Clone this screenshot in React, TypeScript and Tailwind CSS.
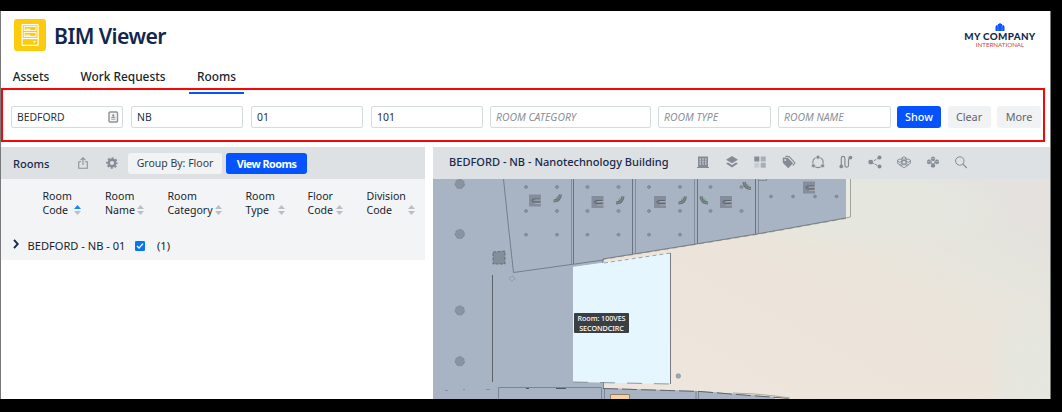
import React from "react";

function AppIcon() {
  return (
    <svg width="32" height="32" viewBox="0 0 32 32" className="shrink-0">
      <rect width="32" height="32" rx="3" fill="#fccb0b" />
      <g fill="none" stroke="#fff" strokeWidth="1.2">
        <rect x="8.1" y="5.6" width="16" height="20.8" rx="0.6" />
        <rect x="10.2" y="7.6" width="11.8" height="3.8" strokeWidth="0.9" />
        <rect x="10.2" y="13.6" width="11.8" height="3.8" strokeWidth="0.9" />
        <path d="M8 19.5h16" />
      </g>
      <path d="M11.5 10.2h5M11.5 16.2h5" stroke="#fff" />
      <circle cx="20.3" cy="22.7" r="1" fill="#fff" />
    </svg>
  );
}

function CompanyLogo() {
  return (
    <div className="flex w-[74px] flex-col items-center">
      <svg width="10" height="8" viewBox="0 0 10 8">
        <path d="M0.5 8V3.4L1.6 2l1.2.8V1.2L4 .8 5 0l1 .8 1.2.4v1.6L8.4 2l1.1 1.4V8z" fill="#0b53ff" />
        <path d="M3 3v5M7 3v5" stroke="#6fa0ff" strokeWidth="0.6" />
      </svg>
      <div className="whitespace-nowrap font-['Lato',sans-serif] text-[9.8px] font-black leading-[11px] tracking-[0.35px] text-[#12294f]">MY COMPANY</div>
      <div className="whitespace-nowrap font-['Lato',sans-serif] text-[6.2px] leading-[6px] text-[#d5432f]">INTERNATIONAL</div>
    </div>
  );
}

function Field({ width, value, hint, contact }: { width: string; value?: string; hint?: string; contact?: boolean }) {
  return (
    <div className={`${width} flex h-[22px] shrink-0 items-center justify-between rounded-[2px] border border-[#d5dcde] bg-white pl-[5px] pr-[3px] text-[10.4px]`}>
      {value ? <span className="pt-px text-[#27313c]">{value}</span> : <span className="whitespace-nowrap pt-px italic text-[#8a9097]">{hint}</span>}
      {contact && (
        <svg width="11" height="12" viewBox="0 0 11 12">
          <rect x="1" y="1" width="8.5" height="10" rx="1" fill="#f4f4f4" stroke="#8f9194" strokeWidth="1.4" />
          <circle cx="5.25" cy="4.3" r="1.1" fill="#85888b" />
          <path d="M3.3 6.8q2-2 4 0zM3.3 8.5h4" fill="#85888b" stroke="#85888b" strokeWidth="0.6" />
        </svg>
      )}
    </div>
  );
}

function Sort({ active }: { active?: boolean }) {
  return (
    <svg width="7" height="10" viewBox="0 0 7 10" className="mb-[2px] shrink-0">
      <path d="M0 4L3.5 0 7 4z" fill={active ? "#1686ff" : "#b9bfc5"} />
      <path d="M0 6h7L3.5 10z" fill="#b9bfc5" />
    </svg>
  );
}

const columns = [
  { a: "Room", b: "Code", w: "w-[62.5px]", s: "w-[38px]" },
  { a: "Room", b: "Name", w: "w-[62.5px]", s: "w-[39px]" },
  { a: "Room", b: "Category", w: "w-[78px]", s: "w-[54px]" },
  { a: "Room", b: "Type", w: "w-[62px]", s: "w-[39px]" },
  { a: "Floor", b: "Code", w: "w-[59px]", s: "w-[35px]" },
  { a: "Division", b: "Code", w: "w-[50px]", s: "w-[48px]" },
];

const G = "#848b95";
function Tool({ children }: { children: React.ReactNode }) {
  return (
    <svg width="14" height="14" viewBox="0 0 14 14" fill={G} className="shrink-0">
      {children}
    </svg>
  );
}

function Toolbar() {
  return (
    <div className="flex items-center gap-[14.7px]">
      <Tool>
        <path d="M2 1.5h10V12h1v1H1v-1h1z" />
        <path d="M4.2 3.2v6.6M7 3.2v6.6M9.8 3.2v6.6" stroke="#d3d7db" strokeWidth="1.1" />
        <path d="M3.2 5.4h7.6M3.2 7.7h7.6" stroke={G} strokeWidth="0.6" />
      </Tool>
      <Tool>
        <path d="M7 1L13 4.7 7 8.2 1 4.7zM1 8.6l2-1.1 4 2.4 4-2.4 2 1.1L7 12.4z" />
      </Tool>
      <Tool>
        <path d="M1.3 1.5h5v5h-5z" />
        <path d="M7.7 1.5h5v5h-5z" fill="#a7adb4" />
        <path d="M1.3 7.7h5v5h-5z" fill="#c7ccd0" />
        <path d="M7.7 7.7h5v5h-5z" fill="#a7adb4" />
      </Tool>
      <Tool>
        <path d="M.8 3.2v4.6l5.4 5.4 5-5-5.4-5.4L1.2 2.6z" />
        <path d="M3.2 1.3l4 .3 5.7 6.1-2 2.9" fill="none" stroke={G} strokeWidth="1.1" />
        <circle cx="3.2" cy="5" r="1" fill="#dde1e4" />
      </Tool>
      <Tool>
        <circle cx="7" cy="7.4" r="5.2" fill="none" stroke={G} strokeWidth="1.1" />
        <g stroke="#dde1e4" strokeWidth="0.7">
          <circle cx="7" cy="2.2" r="2" />
          <circle cx="2.4" cy="10.8" r="2" />
          <circle cx="11.6" cy="10.8" r="2" />
        </g>
      </Tool>
      <Tool>
        <path d="M2.3 10V3.2a1.8 1.8 0 013.6 0v7.2a1.8 1.8 0 003.6 0V5q0-1.8 1.7-2" fill="none" stroke={G} strokeWidth="1.2" />
        <circle cx="2.3" cy="11.4" r="1.9" />
        <circle cx="11.4" cy="2.6" r="1.9" />
      </Tool>
      <Tool>
        <path d="M11.3 2.8L3 7.2l8.3 4.3" fill="none" stroke={G} strokeDasharray="2.5 1" />
        <circle cx="2.7" cy="7.1" r="2.4" />
        <circle cx="11.5" cy="2.6" r="2" />
        <circle cx="11.5" cy="11.5" r="2" />
      </Tool>
      <Tool>
        <g fill="none" stroke={G} strokeWidth="0.9">
          <path d="M7 1.8l2.2 1v2.1L7 6 4.8 4.9V2.8zM7 5.3l2.2 1v2.2L7 9.6 4.8 8.5V6.3zM7 8.9l2.2 1v1.6L7 12.6l-2.2-1.1V9.9zM2.8 4L5 5v3.5l-2.2 1L.6 8.4V5zM11.2 4l2.2 1v3.4l-2.2 1.1L9 8.5V5zM.6 6.2l2.2 1 2.2-1M9 6.2l2.2 1 2.2-1M4.8 3.4L7 4.4l2.2-1M2.6 9.3v.9l2.2 1M11.4 9.3v.9l-2.2 1" />
        </g>
      </Tool>
      <Tool>
        <path d="M7 1.4l2.1 1.1v2.3L7 5.9 4.9 4.8V2.5zM7 8.4l2.1 1.1v2.2L7 12.8l-2.1-1.1V9.5zM3 4.3l2 1.1v2.8L3 9.3 1 8.2V5.4zM11 4.3l2 1.1v2.8l-2 1.1-2-1.1V5.4z" />
        <path d="M7 5.2l1.8 1v2L7 9.1 5.2 8.2v-2z" fill="none" stroke={G} strokeWidth="0.9" />
        <path d="M5 2.9l2 1 2-1M1 6l2 1 2-1M9 6l2 1 2-1" fill="none" stroke="#dde1e4" strokeWidth="0.5" />
      </Tool>
      <Tool>
        <circle cx="5.8" cy="6" r="4.2" fill="none" stroke={G} strokeWidth="1" />
        <path d="M8.8 9l4 4" stroke={G} strokeWidth="1.1" />
      </Tool>
    </div>
  );
}

const dots: [number, number][] = [
  ...[526, 557, 587.5, 618.5, 649, 680].flatMap((x) => [187, 211, 234.7].map((y) => [x, y] as [number, number])),
  [710.5, 187], [741.5, 187], [710.5, 211], [741.5, 211],
  [771, 196.5], [793, 196.5], [815, 196.5], [836.5, 196.5],
];
const units: [number, number][] = [[535, 200.5], [597.5, 202], [660, 202], [726, 202], [809, 187.5]];
const bends: [number, number, number][] = [[557.5, 198, 1], [620, 200, 1], [682.5, 200, 1], [704, 200, -1], [747, 185.5, -1]];

function FloorPlan() {
  return (
    <svg width="617" height="220" viewBox="433 179 617 220" className="block">
      <defs>
        <linearGradient id="floor" x1="0" y1="0.75" x2="1" y2="0.1">
          <stop offset="0" stopColor="#efe7dd" />
          <stop offset="0.55" stopColor="#ece4da" />
          <stop offset="0.72" stopColor="#e9e4db" />
          <stop offset="0.82" stopColor="#e4e5dd" />
          <stop offset="0.94" stopColor="#e4e1de" />
        </linearGradient>
        <radialGradient id="glow">
          <stop offset="0" stopColor="#e5e7df" />
          <stop offset="0.5" stopColor="#e5e7df" stopOpacity="0.8" />
          <stop offset="1" stopColor="#e5e7df" stopOpacity="0" />
        </radialGradient>
      </defs>
      <path d="M433 179h617v220H433z" fill="url(#floor)" />
      <ellipse cx="850" cy="205" rx="180" ry="48" fill="url(#glow)" />
      <ellipse cx="1030" cy="370" rx="45" ry="80" fill="url(#glow)" />
      <path d="M433 179H846V218L757 234 690 245 603 259V263L573 267V382H603V388L700 391 750 395 775 397V399H433z" fill="#a8b4c3" />
      <path d="M573 267L670.5 253V384L573 382z" fill="#e5f6ff" />
      <path d="M670.5 253V384" stroke="#77797a" />
      <path d="M573 382l97.5 2" stroke="#798187" strokeWidth="0.8" strokeDasharray="15 12" fill="none" />
      <path d="M604 263l67-10" stroke="#78828a" strokeWidth="0.7" strokeDasharray="4 3" fill="none" />
      <path d="M846 179h5v38l-5 1z" fill="#ebe9e3" />
      <path d="M850.5 179v38l-5 1" stroke="#9ea39b" fill="none" />
      <path d="M846 218l-89 16-67 11-87 14v4" stroke="#5d6873" strokeWidth="0.8" fill="none" />
      <path d="M846 218.5l-89 16-67 11-87 14" stroke="#8b7967" strokeWidth="0.5" strokeDasharray="5 4" fill="none" />
      <path d="M503.5 179l5 48 5 45.5 90-12.5" stroke="#66717e" strokeWidth="0.8" fill="none" />
      <g stroke="#687481" fill="none">
        <path d="M573.5 179v85M632.5 179v75M697.5 179v65M755.5 179v55" />
        <path d="M571.5 179v85M635.5 179v75M694.5 179v66M758.5 179v54M758.5 180.5h8v-2" strokeWidth="0.6" />
      </g>
      {dots.map(([x, y]) => (
        <g key={`${x}-${y}`} stroke="#7e8895" fill="#929ba7">
          <circle cx={x} cy={y} r="1.4" />
          <path d={`M${x - 2} ${y}h4`} strokeWidth="0.6" />
        </g>
      ))}
      {units.map(([x, y]) => (
        <g key={x}>
          <path d={`M${x - 6} ${y - 6}h12v12h-12z`} fill="#848d9c" />
          <path d={`M${x + 5} ${y - 1.5}h-6q-4 1.5 0 3h6`} fill="none" stroke="#5f656a" strokeWidth="1.2" />
          <path d={`M${x + 6} ${y - 0.5}h-6M${x + 6} ${y + 3}h-6`} stroke="#b5b7b2" strokeWidth="0.7" />
        </g>
      ))}
      {bends.map(([x, y, d]) => (
        <g key={x} transform={`translate(${x} ${y}) scale(${d} 1)`} fill="none">
          <path d="M-4 3q6 0 7-6.5" stroke="#6a7279" strokeWidth="3.2" />
          <path d="M-4 3q6 0 7-6.5" stroke="#8b918f" strokeWidth="1" />
          <path d="M-1.8 0l2.2-2" stroke="#35b85c" strokeWidth="0.8" />
        </g>
      ))}
      {[184, 234, 310.5, 361.3].map((y) => (
        <circle key={y} cx="459.8" cy={y} r="4.6" fill="#8993a1" stroke="#76808d" strokeWidth="0.8" strokeDasharray="3 1" />
      ))}
      <path d="M493 252l12-1v13h-12z" fill="#848e9b" stroke="#5a646e" strokeWidth="0.8" strokeDasharray="3 1.5" />
      <path d="M492.5 275v107" stroke="#5c6469" />
      <circle cx="512" cy="278.5" r="2.4" fill="none" stroke="#7b8592" strokeWidth="0.8" strokeDasharray="1.5 1" />
      <circle cx="678.3" cy="376" r="2.3" fill="#9aa9b7" stroke="#81909e" strokeWidth="0.6" />
      <g fill="none" stroke="#7b8693">
        <path d="M445 390.5h3M463 389.5h2M486 389.5h4" strokeWidth="0.8" />
        <path d="M498.5 399v-11.5h103V399M604.5 399v-10M603.5 382v6.5M696 399v-8M698.5 399v-8" />
        <path d="M603 388.5l97 3 50 4 40 3" stroke="#5c6670" strokeDasharray="15 4" />
      </g>
      <path d="M526 388.5h3M556 388.5h10" stroke="#4f5962" />
      <path d="M610.5 399v-4.5h19v4.5" fill="#f8d49b" stroke="#927f6d" />
      <path d="M733 393l22 1 20 2 15 2" stroke="#aaa99f" fill="none" />
    </svg>
  );
}

export default function App() {
  return (
    <div className="h-[412px] w-[1062px] overflow-hidden bg-black pt-[11px] font-['Noto_Sans',sans-serif] text-[#171f2b]">
      <div className="relative flex h-[388px] w-[1051px] flex-col border-x border-[#77797b] bg-white">
        <header className="flex h-[52px] shrink-0 justify-between pl-[13px] pr-[13px]">
          <div className="flex items-start gap-[8px] pt-[8px]">
            <AppIcon />
            <h1 className="whitespace-nowrap pt-px text-[21.2px] font-semibold leading-[32px] tracking-[-0.55px] text-[#12264d]">BIM Viewer</h1>
          </div>
          <div className="pt-[12px]"><CompanyLogo /></div>
        </header>
        <nav className="flex h-[31px] shrink-0 items-stretch gap-[16px] pl-[4px] text-[11.9px] font-medium leading-[27px]">
          <div className="w-[52px] text-center">Assets</div>
          <div className="w-[100px] whitespace-nowrap text-center">Work Requests</div>
          <div className="w-[55px] border-b-2 border-[#0556f7] text-center">Rooms</div>
        </nav>
        <div className="flex h-[42px] shrink-0 items-center pl-[10px] pt-[4px]">
          <div className="flex gap-[8px]">
            <Field width="w-[112px]" value="BEDFORD" contact />
            <Field width="w-[112px]" value="NB" />
            <Field width="w-[112px]" value="01" />
            <Field width="w-[112px]" value="101" />
          </div>
          <div className="ml-[7px] flex gap-[7px]">
            <Field width="w-[161px]" hint="ROOM CATEGORY" />
            <Field width="w-[113px]" hint="ROOM TYPE" />
            <Field width="w-[113px]" hint="ROOM NAME" />
          </div>
          <div className="ml-[6px] flex gap-[6.5px] text-[10.8px] leading-[22px]">
            <button className="h-[22px] w-[44px] rounded-[3px] bg-[#0453ff] font-medium text-white">Show</button>
            <button className="h-[22px] w-[43px] rounded-[3px] bg-[#f0f2f4] text-[#5f6670]">Clear</button>
            <button className="h-[22px] w-[44px] rounded-[3px] bg-[#f0f2f4] text-[#5f6670]">More</button>
          </div>
        </div>
        <div className="mt-[11px] flex h-[252px] shrink-0 gap-[8px]">
          <section className="w-[424px] shrink-0">
            <div className="flex h-[32px] items-center bg-[#dde1e4] pl-[12px]">
              <h2 className="w-[65px] pt-[2px] text-[11.1px] font-medium text-[#17294c]">Rooms</h2>
              <svg width="10" height="12" viewBox="0 0 10 12" fill="none" stroke="#8c929b" strokeWidth="1.1">
                <path d="M3 4.7H.7v6.5h8.6V4.7H7M5 8V.9M2.6 3.2L5 .8l2.4 2.4" />
              </svg>
              <svg width="12" height="12" viewBox="0 0 12 12" className="ml-[18px]">
                <circle cx="6" cy="6" r="3.3" fill="none" stroke="#868c95" strokeWidth="2.5" />
                <circle cx="6" cy="6" r="5" fill="none" stroke="#868c95" strokeWidth="1.7" strokeDasharray="2 1.93" strokeDashoffset="1" />
              </svg>
              <button className="ml-[10px] h-[21px] w-[94px] rounded-[3px] bg-[#f1f3f5] text-[10.5px] leading-[21px] text-[#333c49]">Group By: Floor</button>
              <button className="ml-[4px] h-[21px] w-[81px] whitespace-nowrap rounded-[3px] bg-[#0453ff] text-[10.8px] font-bold leading-[21px] tracking-[-0.55px] text-white">View Rooms</button>
            </div>
            <div className="h-[81px] bg-[#f3f4f6]">
              <div className="flex pl-[41.5px] pt-[10px] text-[10.6px] leading-[14px]">
                {columns.map((c) => (
                  <div key={c.a + c.b} className={`${c.w} shrink-0`}>
                    <div>{c.a}</div>
                    <div className={`${c.s} flex h-[14px] items-end justify-between`}>
                      <span>{c.b}</span>
                      <Sort active={c.a === "Room" && c.b === "Code"} />
                    </div>
                  </div>
                ))}
              </div>
              <div className="mt-[21px] flex h-[16px] items-center pl-[12px] text-[11.1px] leading-[16px]">
                <svg width="6" height="10" viewBox="0 0 6 10" className="mb-[5px]" fill="none" stroke="#17294c" strokeWidth="1.9">
                  <path d="M1 .8L4.8 5 1 9.2" />
                </svg>
                <span className="ml-[8.5px] w-[107.5px] whitespace-nowrap">BEDFORD - NB - 01</span>
                <svg width="10" height="10" viewBox="0 0 10 10" className="mb-px">
                  <rect width="10" height="10" rx="1.3" fill="#0875f2" />
                  <path d="M2 5.1l2 2L8 2.6" fill="none" stroke="#fff" strokeWidth="1.4" />
                </svg>
                <span className="ml-[12px]">(1)</span>
              </div>
            </div>
          </section>
          <section className="relative w-[617px] shrink-0">
            <div className="flex h-[32px] items-center bg-[#dde1e4] pb-[2px] pl-[16px]">
              <h2 className="w-[247px] whitespace-nowrap text-[11.05px] font-medium text-[#17294c]">BEDFORD - NB - Nanotechnology Building</h2>
              <Toolbar />
            </div>
            <FloorPlan />
            <div className="absolute left-[141px] top-[166px] h-[20px] w-[55px] whitespace-nowrap rounded-[1px] bg-[#3b3f41] text-center text-[7.2px] font-medium leading-[10px] tracking-[-0.05px] text-white">
              Room: 100VES
              <br />
              SECONDCIRC
            </div>
          </section>
        </div>
        <div className="pointer-events-none absolute left-0 top-[77px] h-[54px] w-[1044px] border-2 border-[#fa0505]" />
      </div>
    </div>
  );
}
